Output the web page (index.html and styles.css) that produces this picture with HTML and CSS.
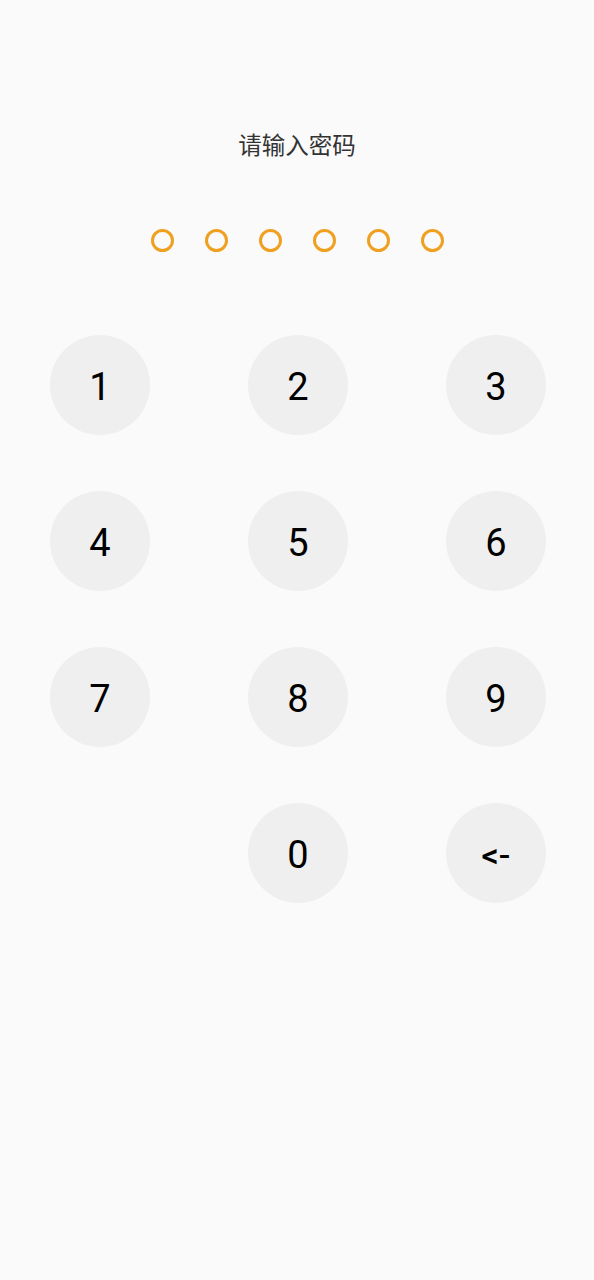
FILE: index.html
```html
<!DOCTYPE html>
<html lang="zh">
<head>
<meta charset="utf-8">
<title>请输入密码</title>
<link rel="stylesheet" href="styles.css">
</head>
<body>
<main class="page">
  <h1 class="title">请输入密码</h1>
  <div class="dots">
    <span class="dot"></span><span class="dot"></span><span class="dot"></span>
    <span class="dot"></span><span class="dot"></span><span class="dot"></span>
  </div>
  <div class="keypad">
    <button class="key">1</button>
    <button class="key">2</button>
    <button class="key">3</button>
    <button class="key">4</button>
    <button class="key">5</button>
    <button class="key">6</button>
    <button class="key">7</button>
    <button class="key">8</button>
    <button class="key">9</button>
    <span class="key-empty"></span>
    <button class="key">0</button>
    <button class="key key-back">&lt;-</button>
  </div>
</main>
</body>
</html>
```

FILE: styles.css
```css
html, body {
  margin: 0;
  padding: 0;
  background: #fafafa;
}
.page {
  width: 594px;
  min-height: 1280px;
  display: flex;
  flex-direction: column;
  align-items: center;
  font-family: Roboto, "Noto Sans CJK SC", sans-serif;
}
.title {
  margin: 128px 0 0;
  font-family: "Noto Sans CJK SC", "Noto Sans", sans-serif;
  font-weight: 400;
  font-size: 23.5px;
  line-height: 32px;
  color: #333333;
  letter-spacing: 0;
}
.dots {
  margin-top: 69px;
  display: flex;
  gap: 31px;
}
.dot {
  width: 23px;
  height: 23px;
  box-sizing: border-box;
  border: 3.5px solid #f0a020;
  border-radius: 50%;
}
.keypad {
  margin-top: 83px;
  align-self: flex-start;
  margin-left: 50px;
  display: grid;
  grid-template-columns: repeat(3, 100px);
  column-gap: 98px;
  row-gap: 56px;
}
.key, .key-empty {
  width: 100px;
  height: 100px;
}
.key {
  border: none;
  border-radius: 50%;
  background: #efefef;
  color: #000;
  font-family: Roboto, sans-serif;
  font-size: 38px;
  font-weight: 400;
  padding: 3px 0 0;
  display: flex;
  align-items: center;
  justify-content: center;
}
.key-back {
  font-weight: 500;
  font-size: 34px;
}
```
